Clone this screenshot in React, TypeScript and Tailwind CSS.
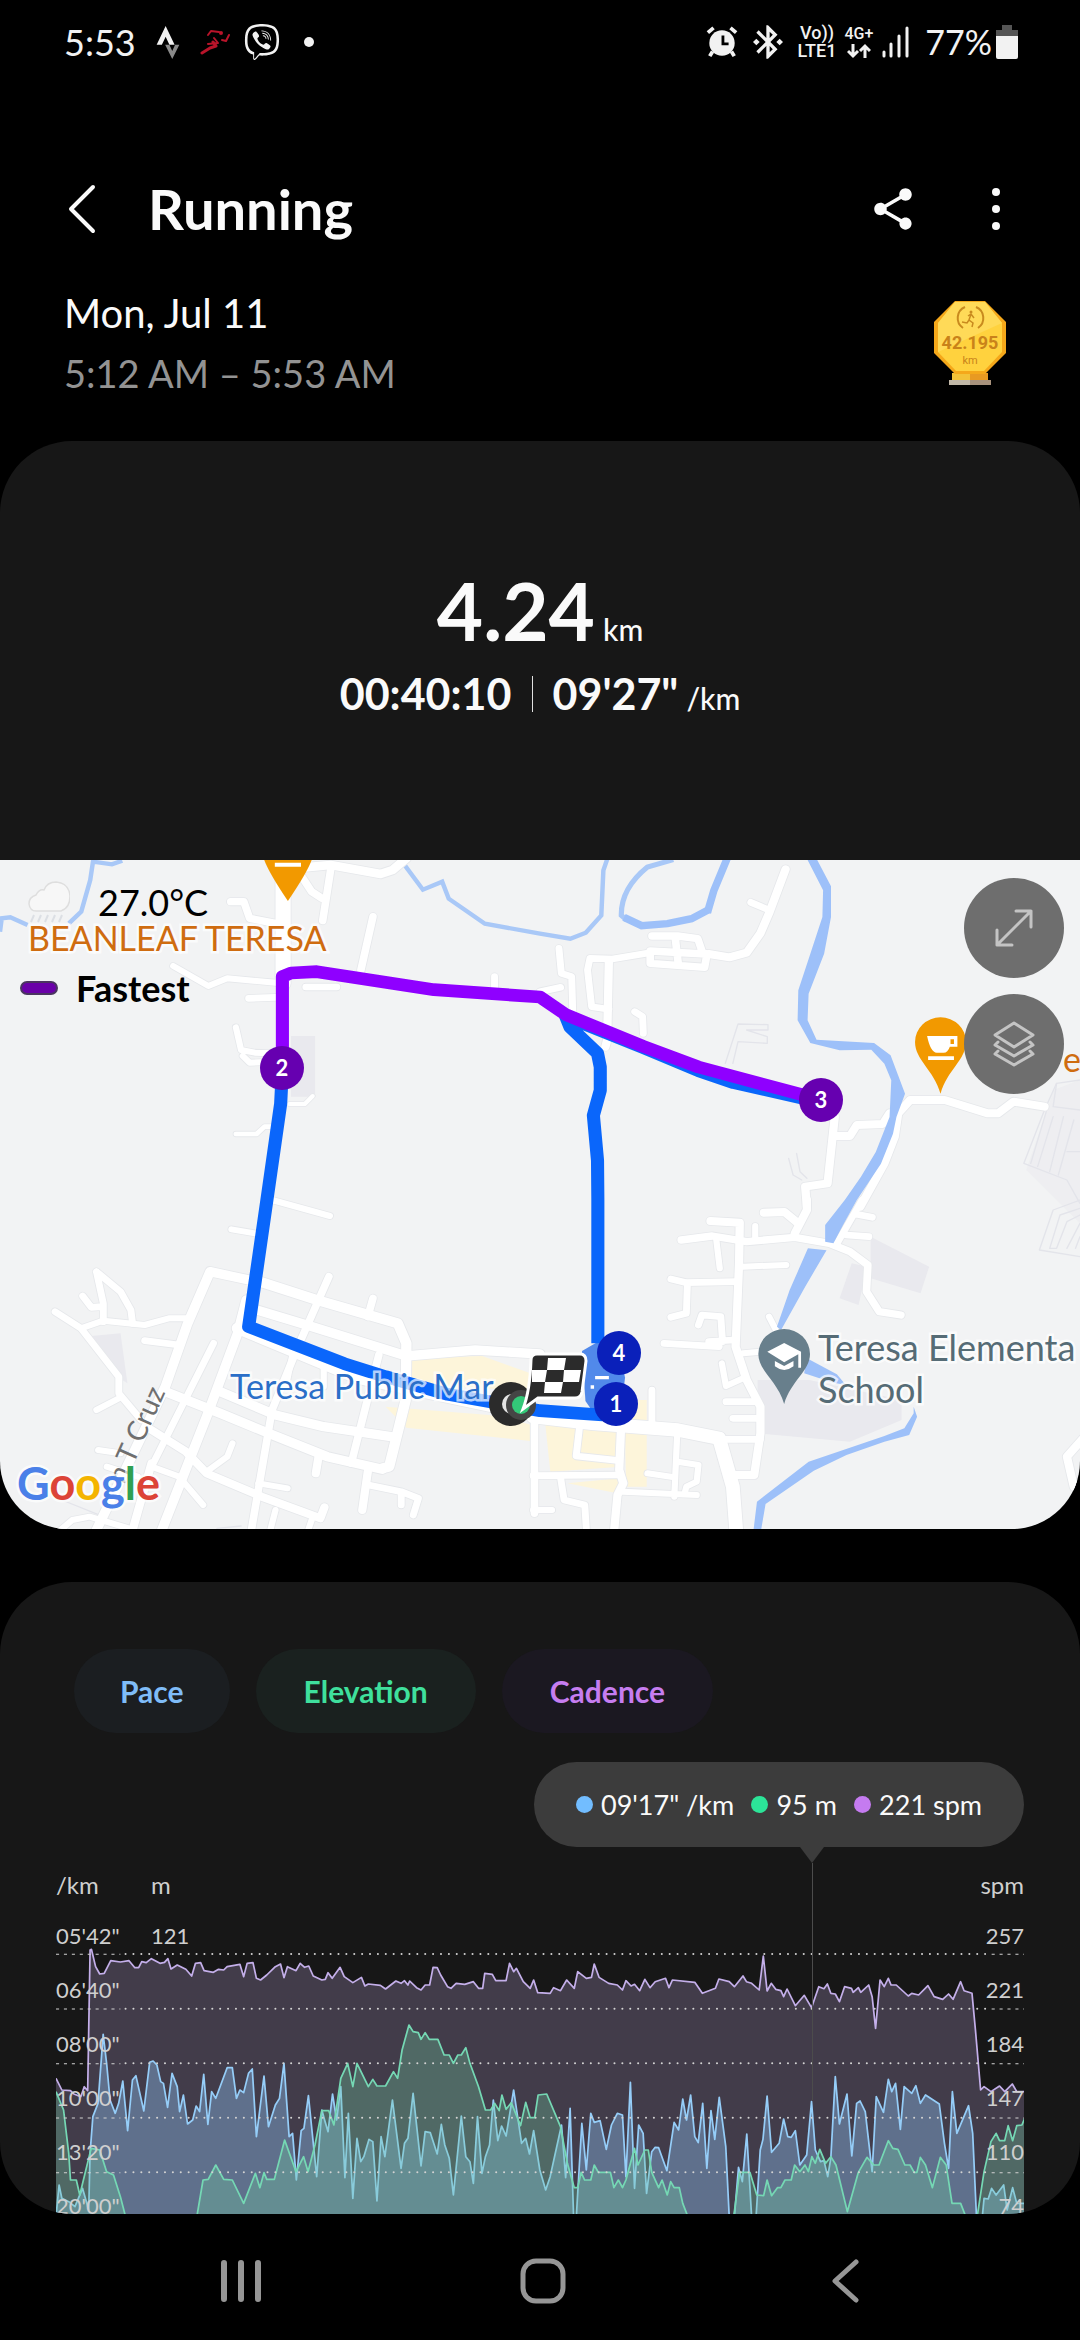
import type { ReactNode } from "react";
import { FaViber } from "react-icons/fa";
import { MdBluetoothConnected, MdShare } from "react-icons/md";

type Road = [d: string, width: number];
type Tile = { at: string; roads: Road[]; faint: string[] };

// The map is drawn in four tiles, each with its own origin
const TILES: Tile[] = [
  {
    at: "translate(0 -30)",
    roads: [
      ["M822 20V400", 44],
      ["M885 52L960 45L1105 72L1140 60L1180 25", 26],
      ["M960 60L937 212M870 70L905 125L935 145", 22],
      ["M670 155H708L725 205L800 220", 22],
      ["M1083 200L1048 360", 22],
      ["M503 348L605 408L660 385L800 398", 18],
      ["M722 445L800 442M888 411H978M1436 380V420", 20],
      ["M685 532L700 600L740 608L790 610M705 618L725 638L770 636", 18],
      ["M840 762L885 762L908 738", 12],
      ["M685 852L745 852L768 830H800", 14],
    ],
    faint: [],
  },
  {
    at: "translate(1568 -30)",
    roads: [
      ["M713 58L665 190L640 250L600 308L550 322L490 312", 24],
      ["M612 157L665 180", 20],
      ["M325 258H400L458 266L472 308L485 312L478 352L320 340V303L480 312M392 258L402 345", 22],
      ["M310 310L210 327L145 325L138 360L150 470L200 478", 20],
      ["M200 330L195 570L190 590", 24],
      ["M55 295L62 370L92 380L95 480M0 425L60 412", 20],
      ["M275 485L298 500L300 550", 20],
      ["M1465 770L1375 755L1330 790H1300L1175 750H1075L1040 790L1030 860L1000 940L930 1070", 24],
      ["M1015 790L995 822L920 825L900 858H862M856 800L835 1000L770 1010L775 1070", 24],
    ],
    faint: [
      "M538 640L575 522L662 524V540H600L660 560V580L575 575L560 640",
      "M722 925L735 975L760 990M745 910L755 965L775 985",
      "M1568 690L1500 700L1465 780L1405 940L1530 990L1568 1060",
      "M1470 785L1425 940M1490 800L1445 950M1520 800L1480 965M1550 810L1505 975M1500 700L1490 770L1568 780M1530 905H1568",
    ],
  },
  {
    at: "translate(0 1020)",
    roads: [
      ["M790 0L958 48M672 88L740 100", 18],
      ["M760 248L610 215L545 370L480 560L280 990", 28],
      ["M740 240L920 300L1155 370L1180 430L1178 600L1130 800L1110 805", 30],
      ["M740 328L900 378L1180 468L1380 450L1568 462", 28],
      ["M955 230L865 440L790 630L730 990", 22],
      ["M1083 295L1068 350", 22],
      ["M280 215L300 310V365M280 215L350 275L380 330L385 370M240 288L265 322L295 320", 20],
      ["M160 335L235 385L345 530V580L410 660", 20],
      ["M235 385L300 362L420 375L490 355H545M345 595L280 630", 18],
      ["M420 422L520 435M620 430L440 800", 20],
      ["M715 300L690 400L600 650L470 990", 28],
      ["M480 575L640 640L780 700L950 770L1110 808", 28],
      ["M640 575L800 645L940 680L1150 712", 28],
      ["M1100 465L1020 790", 22],
      ["M440 690L540 755L600 820L760 890L930 955L942 922", 24],
      ["M675 730L660 770L600 815M285 750L350 760M310 800L400 830", 18],
      ["M440 800L520 830L590 915M750 850L835 865", 18],
      ["M925 770L917 820M1068 815L1052 930", 24],
      ["M1070 855L1165 875L1215 895L1200 945M1165 880V915", 20],
      ["M800 930L785 990M905 960L895 990M850 460L830 560M940 500V560", 18],
      ["M440 790L385 990", 24],
      ["M170 995L210 960L260 950L390 990", 18],
      ["M1552 650V940", 22],
      ["M690 385L1040 535L1420 618L1580 650", 34],
    ],
    faint: ["M180 900L300 950M630 985L700 978"],
  },
  {
    at: "translate(1568 1020)",
    roads: [
      ["M775 0V30L740 100M650 38L710 36L750 70", 24],
      ["M410 120L500 108L600 125L740 112L840 130L900 155L952 195L948 275L985 335L1048 345", 22],
      ["M935 0L860 135M915 42L965 52M890 105L955 110", 20],
      ["M495 63L580 68L578 190L568 440L600 540L640 620V700L622 825H560", 24],
      ["M512 120L522 205M590 200L715 195M625 78V115", 18],
      ["M380 237L425 248L570 245M428 250L425 340L380 352", 20],
      ["M460 375L470 345L525 350L530 425M560 420L490 425L520 440L360 430", 20],
      ["M665 350L685 390M590 460L640 455M528 490L540 558L590 535", 18],
      ["M540 605H620M560 655H630M540 718H640", 20],
      ["M-20 650L150 670L400 690L520 715L560 860L570 995", 40],
      ["M325 570V680M115 680L105 768L230 782", 20],
      ["M235 690L230 810L242 850L225 885L215 995", 24],
      ["M-20 827L230 825M60 835L70 900L130 915L135 995", 20],
      ["M240 875L455 885M398 710L390 890M400 785L460 795L455 845L425 860L420 880", 18],
      ["M312 820L390 832M-20 930H35", 18],
      ["M1590 700L1530 770L1550 860", 24],
    ],
    faint: [
      "M1568 0L1490 30L1450 150L1568 170",
      "M1568 25L1510 45L1480 145H1500L1530 65L1568 45M1530 145L1568 70M1555 145L1568 110",
    ],
  },
];

const CADENCE =
  "163,475 180,510 205,512 215,522 235,530 245,500 255,512 262,90 266,88 278,140 290,162 303,160 322,122 350,126 375,122 392,143 403,143 412,125 425,128 440,116 465,130 478,127 488,116 497,147 515,135 540,148 557,168 568,130 583,128 593,152 620,157 635,148 650,150 660,140 697,133 708,170 718,130 735,128 745,175 757,180 775,165 800,140 815,132 825,173 835,140 860,152 872,130 885,142 897,138 910,168 935,180 945,178 953,158 965,175 988,142 1000,170 1025,188 1050,172 1060,198 1070,192 1105,196 1120,207 1150,183 1165,190 1175,182 1185,195 1190,183 1210,203 1223,210 1235,195 1248,195 1258,142 1270,143 1280,165 1300,200 1310,205 1325,190 1350,193 1375,185 1390,205 1402,205 1408,160 1430,163 1440,182 1470,182 1480,130 1492,155 1500,145 1520,185 1540,205 1550,180 1562,218 1598,220 1608,203 1628,212 1646,180 1668,205 1678,155 1703,175 1718,172 1726,132 1740,172 1768,190 1793,195 1808,210 1818,182 1833,198 1843,193 1858,212 1873,178 1888,203 1903,185 1933,175 1943,203 1953,180 2018,187 2040,220 2078,205 2088,177 2118,185 2133,200 2158,168 2168,185 2183,190 2205,210 2217,108 2228,213 2240,190 2253,208 2268,212 2276,230 2286,207 2310,257 2336,226 2357,263 2378,200 2393,206 2403,192 2413,220 2426,222 2438,245 2453,200 2473,205 2478,217 2493,203 2500,217 2523,195 2533,230 2543,325 2556,180 2568,200 2580,175 2588,195 2603,195 2638,228 2648,220 2668,225 2695,197 2713,230 2738,238 2755,222 2768,238 2790,185 2800,212 2823,220 2833,330 2848,510 2858,500 2878,515 2903,498 2918,515 2940,492 2953,515 2976,515";

const ELEVATION =
  "163,515 185,570 200,700 205,780 222,780 232,825 265,685 290,690 310,755 330,765 350,830 365,890 572,890 590,780 605,778 627,735 650,778 675,780 708,850 742,760 755,803 767,758 775,778 797,778 827,660 860,755 882,710 895,755 915,675 935,572 955,572 970,615 990,475 1010,430 1025,500 1037,430 1070,500 1083,478 1095,498 1120,498 1143,455 1155,475 1168,390 1188,315 1200,335 1215,338 1223,358 1235,338 1247,358 1272,358 1290,405 1305,405 1317,430 1330,405 1340,405 1353,383 1365,430 1390,500 1410,570 1425,570 1437,550 1450,572 1458,525 1470,568 1485,548 1512,617 1527,547 1540,593 1553,593 1563,525 1588,522 1628,620 1648,730 1668,803 1678,803 1688,757 1698,780 1716,780 1726,735 1738,757 1773,757 1783,803 1796,780 1808,803 1818,780 1843,685 1853,735 1873,690 1883,690 1893,757 1913,803 1923,780 1938,825 1948,785 1958,803 1973,803 1983,850 1998,890 2131,890 2148,757 2178,757 2198,825 2218,827 2228,780 2241,827 2258,803 2268,803 2280,780 2298,780 2308,735 2323,755 2338,735 2348,755 2358,710 2368,730 2381,688 2398,730 2413,710 2428,735 2461,875 2493,757 2518,712 2538,735 2553,735 2580,662 2593,685 2608,688 2628,735 2643,735 2655,757 2663,757 2673,712 2688,735 2708,803 2731,712 2748,735 2765,850 2790,850 2805,890 2838,890 2858,755 2878,665 2893,640 2903,662 2918,662 2928,617 2941,662 2953,617 2968,615 2976,595";

const PACE =
  "163,890 172,795 180,835 200,845 218,860 240,805 258,870 262,700 270,590 285,550 300,343 310,430 320,540 335,580 345,550 357,483 371,632 385,480 395,467 418,573 435,427 445,423 456,435 467,485 475,490 487,562 500,460 515,500 522,575 533,525 545,612 560,600 570,558 580,575 592,463 604,613 615,515 627,535 660,443 675,443 687,535 697,510 708,518 722,460 733,447 745,650 767,468 780,620 800,555 812,535 825,430 840,650 850,640 861,780 875,632 883,625 896,527 920,770 935,570 943,600 953,635 966,522 978,600 990,500 1002,773 1012,580 1025,835 1037,655 1048,725 1057,710 1072,658 1083,665 1095,843 1107,650 1118,710 1140,540 1165,745 1175,670 1185,655 1200,520 1223,738 1235,635 1250,638 1270,702 1282,613 1292,675 1305,715 1317,825 1340,588 1353,710 1365,725 1375,790 1387,590 1400,760 1410,710 1422,675 1433,540 1446,662 1457,618 1470,648 1492,510 1505,600 1515,670 1527,655 1538,702 1550,632 1568,750 1585,810 1598,770 1631,615 1643,773 1656,565 1666,890 1674,890 1690,610 1703,750 1716,580 1726,607 1743,602 1761,688 1776,615 1793,580 1808,585 1818,770 1831,487 1843,805 1855,615 1868,640 1878,820 1893,695 1903,682 1913,683 1937,752 1958,607 1971,630 1983,537 1994,600 2006,525 2018,650 2028,668 2041,550 2053,745 2065,572 2076,658 2089,532 2108,680 2118,890 2133,890 2145,742 2156,785 2169,642 2183,890 2196,890 2208,690 2216,658 2228,528 2241,697 2263,670 2276,597 2288,650 2298,652 2310,632 2323,735 2343,705 2357,545 2368,690 2383,725 2393,722 2404,770 2413,715 2426,470 2438,612 2460,522 2474,708 2488,550 2498,543 2513,575 2533,755 2545,530 2566,577 2580,478 2590,515 2601,490 2615,628 2626,500 2648,520 2660,497 2673,550 2688,525 2728,552 2743,670 2755,745 2766,515 2779,640 2813,557 2825,640 2836,890 2853,890 2858,835 2870,837 2880,805 2893,825 2915,795 2925,870 2941,803 2953,850 2976,850";

const SERIES = [
  { name: "cadence", points: CADENCE, fill: "#a792c1", alpha: 0.3, stroke: "#c4afea" },
  { name: "pace", points: PACE, fill: "#7ca4ce", alpha: 0.5, stroke: "#95cdf8" },
  { name: "elevation", points: ELEVATION, fill: "#71c9a0", alpha: 0.32, stroke: "#75d8b4" },
];

const PACE_TICKS = ["05'42\"", "06'40\"", "08'00\"", "10'00\"", "13'20\"", "20'00\""];
const CADENCE_TICKS = ["257", "221", "184", "147", "110", "74"];

function StatusBar() {
  return (
    <div className="flex h-[84px] items-center justify-between pl-16 pr-[62px] text-[#f2f2f2]">
      <div className="flex items-center">
        <span className="text-[36px] leading-10">5:53</span>
        <svg className="ml-5 h-[34px] w-6" viewBox="0 0 24 36">
          <path d="M0 21L9.500 1L19 21H13.500L9.500 12.500L5.500 21Z" fill="#f2f2f2" />
          <path d="M9 21H13.500L16.500 27.500L19.500 21H24L16.500 36Z" fill="#8a8a8a" />
        </svg>
        <svg className="ml-5 h-7 w-8" viewBox="0 0 32 28" fill="none" stroke="#b8142a" strokeLinecap="round" strokeLinejoin="round">
          <path d="M2 25L10 20L16 18L13 14" strokeWidth="3" />
          <path d="M8 16L18 15L14 10" strokeWidth="2" />
          <path d="M8 7L11 3L19 4" strokeWidth="2" />
          <circle cx="21" cy="5" r="2" fill="#b8142a" stroke="none" />
          <path d="M22 12L26 13L29 7" strokeWidth="2" />
        </svg>
        <FaViber className="ml-3 size-9" />
        <span className="ml-6 size-[10px] rounded-full bg-[#f2f2f2]" />
      </div>
      <div className="flex items-center">
        <svg className="h-8 w-8" viewBox="0 0 32 34">
          <path d="M1 7L7 2M31 7L25 2" stroke="#f2f2f2" strokeWidth="4" />
          <path d="M6 27L3 32M26 27L29 32" stroke="#f2f2f2" strokeWidth="4" />
          <circle cx="16" cy="18" r="13.500" fill="#f2f2f2" />
          <path d="M17 10V19H23" stroke="#000" strokeWidth="3" fill="none" />
        </svg>
        <MdBluetoothConnected className="ml-[10px] size-10" />
        <span className="ml-[10px] flex flex-col items-center font-[Roboto] text-[18px] font-medium leading-[18px]">
          <span>Vo))</span>
          <span>LTE1</span>
        </span>
        <span className="ml-2 flex flex-col items-center font-[Roboto] text-[16px] font-medium leading-[18px]">
          4G+
          <svg className="h-4 w-6" viewBox="0 0 24 16" fill="none" stroke="#f2f2f2" strokeWidth="3">
            <path d="M6 1V13M1 8L6 13L11 8M18 15V3M13 8L18 3L23 8" />
          </svg>
        </span>
        <svg className="ml-2 h-8 w-7" viewBox="0 0 28 32" stroke="#f2f2f2" strokeWidth="3" strokeLinecap="round">
          <path d="M3 26V30M10 18V30M18 10V30M26 2V30" />
        </svg>
        <span className="ml-4 text-[34px] leading-10">77%</span>
        <svg className="ml-1 h-[34px] w-[22px]" viewBox="0 0 22 34">
          <path d="M6 0H16V5H22V12H0V5H6Z" fill="#555" />
          <path d="M0 11H22V32Q22 34 20 34H2Q0 34 0 32Z" fill="#f2f2f2" />
        </svg>
      </div>
    </div>
  );
}

function Header() {
  return (
    <header className="mt-[75px] flex h-[100px] items-center pl-16 pr-[76px]">
      <button aria-label="Back">
        <svg className="h-[52px] w-9" viewBox="0 0 36 52" fill="none" stroke="#fafafa" strokeWidth="4" strokeLinecap="round" strokeLinejoin="round">
          <path d="M29 4L7 26L29 48" />
        </svg>
      </button>
      <h1 className="ml-12 text-[56px] font-bold leading-[64px]">Running</h1>
      <button aria-label="Share" className="ml-auto">
        <MdShare className="size-[50px]" />
      </button>
      <button aria-label="More options" className="ml-[70px]">
        <svg className="h-12 w-4" viewBox="0 0 16 48" fill="#fafafa">
          <circle cx="8" cy="7" r="4" />
          <circle cx="8" cy="24" r="4" />
          <circle cx="8" cy="41" r="4" />
        </svg>
      </button>
    </header>
  );
}

function Badge() {
  return (
    <svg className="h-[84px] w-[72px]" viewBox="0 0 72 84">
      <path d="M18 72H54V79H18Z" fill="#f3c238" />
      <path d="M36 72H54V79H36Z" fill="#e89a22" />
      <path d="M15 79H57V84H15Z" fill="#c2b8a8" />
      <path d="M36 79H57V84H36Z" fill="#a8927c" />
      <path d="M21 0H51L72 21V52L51 73H21L0 52V21Z" fill="#f5a81a" />
      <path d="M21 1H51L68 22V51L50 70H22L4 51V22Z" fill="#ffd23e" />
      <path d="M21 1H51L68 22L4 51V22Z" fill="#ffda58" />
      <g fill="none" stroke="#c98a1e" strokeWidth="2">
        <path d="M31 6A12 12 0 0 0 29 27M42 6A12 12 0 0 1 44 27" />
        <path d="M37 13L35 19L39 22L38 26M35 19L33 22L28 21M34 15L37 13L40 17" strokeWidth="1.500" />
      </g>
      <circle cx="37" cy="11" r="1.500" fill="#c98a1e" />
      <text x="36" y="48" textAnchor="middle" fontSize="18" className="fill-[#c9821a] font-[Roboto] font-bold">42.195</text>
      <text x="36" y="63" textAnchor="middle" fontSize="11" className="fill-[#c9821a] font-[Roboto]">km</text>
    </svg>
  );
}

function RoadMap() {
  return (
    <svg className="block aspect-[1080/669] w-full" viewBox="0 0 3136 2007" preserveAspectRatio="none">
      <rect width="3136" height="2007" fill="#f2f3f4" />
      <g fill="#e9e9ee">
        <path d="M845 528H915V710H845Z" />
        <path d="M265 1428L350 1420L370 1570L345 1553Z" />
        <path d="M2528 1130L2698 1220L2673 1300L2528 1255Z" />
        <path d="M2473 1210L2518 1220L2493 1335L2438 1315Z" />
        <path d="M2200 1560H2350L2618 1620V1680L2468 1745L2200 1720Z" />
        <path d="M3060 690L3136 660V1090L2980 930Z" opacity="0.5" />
      </g>
      <g fill="#fdf5da">
        <path d="M1190 1495L1400 1488L1540 1540V1593L1190 1573Z" />
        <path d="M1120 1640L1420 1665L1568 1700L1540 1743L1180 1703Z" />
        <path d="M1583 1690L1808 1700L1803 1820L1598 1835Z" />
        <path d="M1813 1620H1878V1880H1818Z" />
        <path d="M1648 1870L1798 1855L1793 1900Z" />
      </g>
      <g fill="none" stroke="#a9c8f7">
        <path d="M0 215L5 175L30 172L80 195M200 190L236 155L262 60L270 5L325 13L355 2" strokeWidth="13" />
        <path d="M1172 11L1228 89L1284 65L1303 116L1408 191L1568 221L1656 236L1701 218L1746 166L1752 31L1764 -5" strokeWidth="13" />
        <path d="M1955 -1L1880 21Q1803 85 1804 166L1820 180" strokeWidth="15" />
        <path d="M1812 172L1863 197L1938 191L2008 176L2060 148" stroke="#9dc0f9" strokeWidth="22" />
        <path d="M2054 158L2073 91L2112 -6" stroke="#9dc0f9" strokeWidth="22" />
      </g>
      {TILES.map((tile) => (
        <g key={tile.at} transform={tile.at} fill="none" strokeLinecap="round" strokeLinejoin="round">
          {tile.faint.map((d) => (
            <path key={d} d={d} stroke="#e3e4ea" strokeWidth="4" />
          ))}
          {tile.roads.map(([d, width]) => (
            <path key={d} d={d} stroke="#e6e8eb" strokeWidth={width + 5} />
          ))}
        </g>
      ))}
      {TILES.map((tile) => (
        <g key={tile.at} transform={tile.at} fill="none" stroke="#fff" strokeLinecap="round" strokeLinejoin="round">
          {tile.roads.map(([d, width]) => (
            <path key={d} d={d} strokeWidth={width} />
          ))}
        </g>
      ))}
      {/* river */}
      <g fill="#9dc0f9">
        <path d="M2343 -4H2371L2413 79V171L2393 281L2348 401L2345 481L2371 539L2538 549L2586 586L2628 701L2603 771L2593 821L2558 911L2488 1020L2448 1095L2420 1150L2396 1145V1095L2453 1020L2500 950L2543 876L2583 771L2588 661L2568 611L2530 569L2438 571L2353 549L2316 481L2318 391L2353 281L2388 171L2390 91Z" />
        <path d="M2346 1165L2400 1171L2338 1280L2268 1410L2256 1400L2293 1290Z" />
        <path d="M2343 1495L2430 1543L2456 1575L2420 1568L2335 1540Z" />
        <path d="M2653 1640L2663 1670L2640 1725L2568 1745L2458 1785L2363 1832L2223 1932L2210 2010H2188L2198 1925L2348 1805L2568 1728L2626 1705L2653 1660Z" />
      </g>
      {/* bus stop under the km markers */}
      <path d="M1690 1473L1740 1443L1800 1473L1815 1553L1800 1673L1740 1683L1700 1623Z" fill="#5189ea" />
      <path d="M1728 1553H1768M1715 1581H1725" stroke="#fff" strokeWidth="10" />
      {/* route */}
      <g fill="none" strokeWidth="38" strokeLinejoin="round">
        <path d="M1750 1665L1568 1652L1300 1603L1120 1550L1000 1511L722 1400L775 1020L815 731L820 626" stroke="#0a66fb" />
        <path d="M2385 726L2328 714L2130 668L2028 632L1868 563L1643 470L1655 501L1735 580L1743 621V691L1723 766L1735 901L1736 1021V1450" stroke="#0a66fb" />
        <path d="M820 626V350L845 339L920 335L1260 389L1568 411L1643 464L1868 559L2028 621L2328 704L2385 721" stroke="#8f00ff" />
      </g>
      {/* place pins */}
      <path d="M764 -10H908Q900 25 836 123Q775 30 764 -10Z" fill="#f29900" />
      <path d="M798 14H874" stroke="#fff" strokeWidth="12" />
      <path d="M2731 472A74 74 0 0 1 2805 546C2805 600 2750 630 2731 701C2712 630 2657 600 2657 546A74 74 0 0 1 2731 472Z" fill="#f29900" />
      <path d="M2692 528H2780V560H2758Q2752 578 2740 578H2720Q2702 578 2692 528ZM2760 538V552H2770V538ZM2695 589H2770V600H2695Z" fill="#fff" fillRule="evenodd" />
      <path d="M2277 1407A75 75 0 0 1 2352 1482C2352 1533 2296 1563 2277 1632C2258 1563 2202 1533 2202 1482A75 75 0 0 1 2277 1407Z" fill="#687f8c" />
      <path d="M2277 1449L2326 1475V1523H2318V1483L2277 1507L2228 1475ZM2250 1503L2277 1518L2304 1503V1519Q2277 1541 2250 1519Z" fill="#fff" />
    </svg>
  );
}

function FinishFlag() {
  return (
    <svg className="absolute left-[488px] top-[491px] h-[76px] w-[102px]" viewBox="0 0 102 76">
      <circle cx="23" cy="53" r="22" fill="#2b2b2b" />
      <path d="M24 43A10 10 0 0 0 24 63Z" fill="#e4e4e4" />
      <circle cx="33" cy="54" r="15" fill="#454545" />
      <circle cx="33" cy="54" r="9" fill="#33c878" />
      <path d="M49 3H92Q98 3 98 10L94 41Q93 47 87 47H50L35 58Q42 40 43 9Q43 3 49 3Z" fill="#2b2b2b" stroke="#fff" strokeWidth="3" />
      <path d="M60 7H78L76 19H59ZM44 19H59L57 31H44ZM76 19H93L91 31H75ZM57 31H75L73 42H56Z" fill="#fff" />
    </svg>
  );
}

function Marker({ className, children }: { className: string; children: ReactNode }) {
  return (
    <span className={`absolute flex size-11 items-center justify-center rounded-full text-[22px] font-bold leading-6 text-white ${className}`}>
      {children}
    </span>
  );
}

function MapPanel() {
  return (
    <section className="relative overflow-hidden rounded-b-[68px]">
      <RoadMap />
      <div className="absolute left-7 top-5 flex items-center gap-7 text-[36px] leading-[44px] text-black">
        <svg className="h-11 w-[42px]" viewBox="0 0 42 44">
          <path d="M8 31H33Q42 28 42 16Q41 3 28 2Q19 2 16 10Q11 9 8 15Q1 17 1 24Q2 31 8 31Z" fill="#f7f7f7" stroke="#dedede" strokeWidth="1.500" />
          <path d="M6 35L3 42M13 35L10 42M20 35L17 42M27 35L24 42M34 35L31 42" stroke="#dcdfe4" strokeWidth="2" />
        </svg>
        27.0°C
      </div>
      <p className="absolute left-7 top-14 text-[34px] leading-[44px] text-[#cf6c10] [-webkit-text-stroke:5px_#ffffffb0] [paint-order:stroke_fill]">
        BEANLEAF TERESA
      </p>
      <div className="absolute left-5 top-[106px] flex items-center gap-[18px] text-[36px] font-bold leading-[44px] text-black">
        <span className="h-[14px] w-[38px] rounded-full border-2 border-[#4b3560] bg-[#6a00a8]" />
        Fastest
      </div>
      <p className="absolute left-[230px] top-[504px] text-[34px] leading-[44px] text-[#2b6fc8] [-webkit-text-stroke:5px_#ffffffb0] [paint-order:stroke_fill]">
        Teresa Public Mar
      </p>
      <p className="absolute left-[818px] top-[466px] whitespace-nowrap text-[36px] leading-[42px] text-[#566c76] [-webkit-text-stroke:5px_#ffffffb0] [paint-order:stroke_fill]">
        Teresa Elementa
        <br />
        School
      </p>
      <p className="absolute left-[1063px] top-[177px] text-[34px] leading-[44px] text-[#cf6c10]">e</p>
      <p className="absolute left-[84px] top-[558px] -rotate-[66deg] whitespace-nowrap text-[28px] leading-8 text-[#6f6f6f]">
        n T Cruz
      </p>
      <p aria-label="Google" className="absolute left-[17px] top-[593px] text-[45px] font-bold leading-[60px] [-webkit-text-stroke:5px_#ffffffb0] [paint-order:stroke_fill]">
        <span className="text-[#4a80e8]">G</span>
        <span className="text-[#dc4437]">o</span>
        <span className="text-[#f4b400]">o</span>
        <span className="text-[#4a80e8]">g</span>
        <span className="text-[#2fa052]">l</span>
        <span className="text-[#dc4437]">e</span>
      </p>
      <FinishFlag />
      <Marker className="left-[260px] top-[186px] bg-[#6600b0]">2</Marker>
      <Marker className="left-[799px] top-[218px] bg-[#6600b0]">3</Marker>
      <Marker className="left-[597px] top-[471px] bg-[#0a20ba]">4</Marker>
      <Marker className="left-[594px] top-[522px] bg-[#0a20ba]">1</Marker>
      <div className="absolute right-4 top-[18px] flex flex-col gap-4">
        <button aria-label="Expand map" className="flex size-[100px] items-center justify-center rounded-full bg-[#6e6e6e]">
          <svg className="size-10" viewBox="0 0 40 40" fill="none" stroke="#c4c4c4" strokeWidth="3" strokeLinecap="round" strokeLinejoin="round">
            <path d="M3 37L37 3M22 3H37V19M3 22V37H18" />
          </svg>
        </button>
        <button aria-label="Map layers" className="flex size-[100px] items-center justify-center rounded-full bg-[#6e6e6e]">
          <svg className="h-[46px] w-[42px]" viewBox="0 0 42 46" fill="none" stroke="#c4c4c4" strokeWidth="3" strokeLinecap="round" strokeLinejoin="round">
            <path d="M21 2L40 14L21 26L2 14ZM5 21L2 24L21 35L40 24L37 21M5 30L2 33L21 44L40 33L37 30" />
          </svg>
        </button>
      </div>
    </section>
  );
}

function Chart() {
  return (
    <div className="relative mt-[19px] h-[294px] text-[22px] leading-8 text-[#cfcfcf]">
      <svg className="block size-full" viewBox="163 0 2811 882" preserveAspectRatio="none">
        {SERIES.map((s) => (
          <g key={s.name}>
            <polygon points={`163,900 ${s.points} 2976,900`} fill={s.fill} fillOpacity={s.alpha} />
            <polyline points={s.points} fill="none" stroke={s.stroke} strokeWidth="5" strokeLinejoin="round" />
          </g>
        ))}
        {[102, 266, 430, 593, 757].map((y) => (
          <g key={y} stroke="#d2d2d2" fill="none">
            <path d={`M365 ${y}H2865`} strokeWidth="6" strokeLinecap="round" strokeDasharray="0 22.900" />
            <path d={`M163 ${y + 1}H350M2880 ${y + 1}H2976`} strokeWidth="3" strokeDasharray="9 14" />
          </g>
        ))}
      </svg>
      <div className="absolute inset-0 flex overflow-hidden">
        <ul className="w-[95px]">
          {PACE_TICKS.map((tick) => (
            <li key={tick} className="h-[54px]">{tick}</li>
          ))}
        </ul>
        <span>121</span>
        <ul className="ml-auto text-right">
          {CADENCE_TICKS.map((tick) => (
            <li key={tick} className="h-[54px]">{tick}</li>
          ))}
        </ul>
      </div>
    </div>
  );
}

function ChartCard() {
  return (
    <section className="mt-[53px] overflow-hidden rounded-[72px] bg-[#171717] px-14 pt-[67px]">
      <div className="flex gap-[26px] pl-[18px] text-[30px] font-bold leading-10">
        <button className="h-[84px] rounded-full bg-[#1b1e21] px-[46px] text-[#7fbcf8]">Pace</button>
        <button className="h-[84px] rounded-full bg-[#1a211f] px-12 text-[#3fe09d]">Elevation</button>
        <button className="h-[84px] rounded-full bg-[#1b1821] px-12 text-[#c67df0]">Cadence</button>
      </div>
      <div className="relative z-10 ml-auto mt-[29px] flex h-[85px] w-[490px] items-center justify-between rounded-full bg-[#3c3c3c] px-[42px] text-[27px] leading-9 text-[#fafafa]">
        <span className="flex items-center gap-2">
          <i className="size-[17px] rounded-full bg-[#72bdff]" />
          09'17" /km
        </span>
        <span className="flex items-center gap-2">
          <i className="size-[17px] rounded-full bg-[#2ce498]" />
          95 m
        </span>
        <span className="flex items-center gap-2">
          <i className="size-[17px] rounded-full bg-[#c57bf0]" />
          221 spm
        </span>
        <div className="absolute left-[266px] top-full flex flex-col items-center">
          <svg className="h-4 w-6" viewBox="0 0 24 16">
            <path d="M0 0H24L12 16Z" fill="#3c3c3c" />
          </svg>
          <span className="h-[237px] w-px bg-[#4c4c4c]" />
        </div>
      </div>
      <div className="mt-[22px] flex text-[24px] leading-8 text-[#cfcfcf]">
        <span className="w-[95px]">/km</span>
        <span>m</span>
        <span className="ml-auto">spm</span>
      </div>
      <Chart />
    </section>
  );
}

function NavBar() {
  return (
    <nav className="grid h-[126px] grid-cols-3 items-center pl-[90px] pr-[84px] pt-2">
      <button aria-label="Recent apps" className="justify-self-center">
        <svg className="h-11 w-10" viewBox="0 0 40 44" stroke="#969696" strokeWidth="6" strokeLinecap="round">
          <path d="M3 4V40M20 4V40M37 4V40" />
        </svg>
      </button>
      <button aria-label="Home" className="justify-self-center">
        <svg className="size-[46px]" viewBox="0 0 46 46" fill="none" stroke="#969696" strokeWidth="5">
          <rect x="3" y="3" width="40" height="40" rx="13" />
        </svg>
      </button>
      <button aria-label="Go back" className="justify-self-center">
        <svg className="h-[46px] w-7" viewBox="0 0 28 46" fill="none" stroke="#969696" strokeWidth="5" strokeLinecap="round" strokeLinejoin="round">
          <path d="M25 4L4 23L25 42" />
        </svg>
      </button>
    </nav>
  );
}

export default function App() {
  return (
    <div className="min-h-screen w-full overflow-hidden bg-black font-[Lato,sans-serif] text-[#fafafa]">
      <StatusBar />
      <Header />
      <div className="flex items-center justify-between pb-[38px] pl-16 pr-[74px] pt-6">
        <div className="leading-[60px]">
          <p className="text-[40px] leading-[60px]">Mon, Jul 11</p>
          <p className="text-[38px] leading-[60px] text-[#939393]">5:12 AM – 5:53 AM</p>
        </div>
        <Badge />
      </div>
      <section className="flex flex-col items-center gap-4 rounded-t-[72px] bg-[#171717] pb-[138px] pt-[129px]">
        <p className="flex items-baseline gap-2 text-[80px] font-bold leading-[80px]">
          4.24
          <span className="text-[30px] font-medium leading-8">km</span>
        </p>
        <div className="flex items-center gap-5 text-[43px] font-bold leading-[56px]">
          <span>00:40:10</span>
          <span className="h-9 w-px bg-[#e0e0e0]" />
          <p className="flex items-baseline gap-2">
            09'27"
            <span className="text-[30px] font-medium leading-8">/km</span>
          </p>
        </div>
      </section>
      <MapPanel />
      <ChartCard />
      <NavBar />
    </div>
  );
}
